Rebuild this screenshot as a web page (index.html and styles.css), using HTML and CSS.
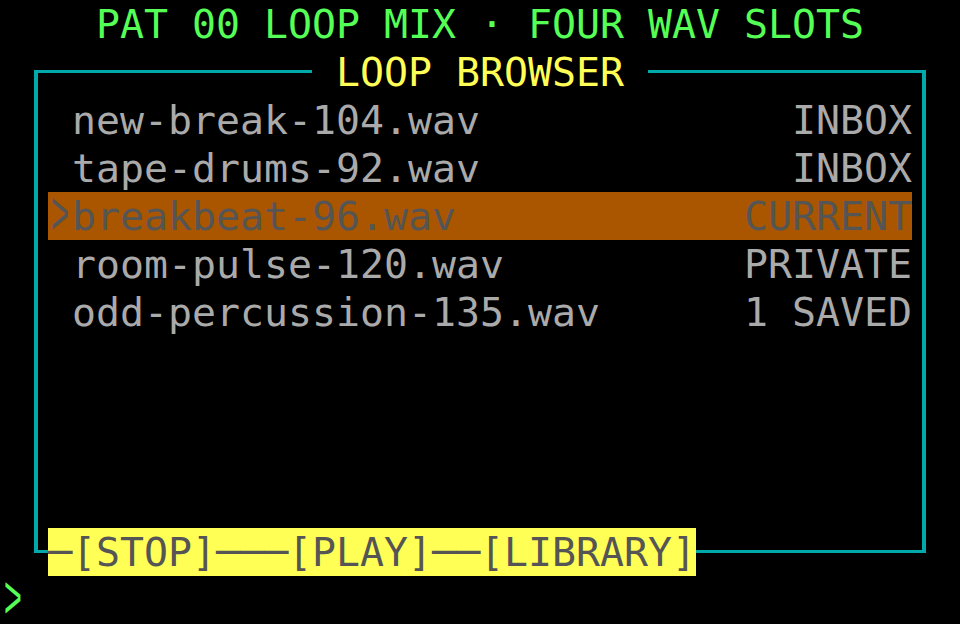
FILE: index.html
```html
<!DOCTYPE html>
<html>
<head>
<meta charset="utf-8">
<link rel="stylesheet" href="styles.css">
</head>
<body>
<div class="screen">
  <div class="title">PAT 00 LOOP MIX · FOUR WAV SLOTS</div>
  <div class="panel">
    <div class="legend"> LOOP BROWSER </div>
    <ul class="list">
      <li class="item"><span class="mark"></span><span class="name">new-break-104.wav</span><span class="status">INBOX</span></li>
      <li class="item"><span class="mark"></span><span class="name">tape-drums-92.wav</span><span class="status">INBOX</span></li>
      <li class="item selected"><span class="mark"><span class="chev">&gt;</span></span><span class="name">breakbeat-96.wav</span><span class="status">CURRENT</span></li>
      <li class="item"><span class="mark"></span><span class="name">room-pulse-120.wav</span><span class="status">PRIVATE</span></li>
      <li class="item"><span class="mark"></span><span class="name">odd-percussion-135.wav</span><span class="status">1 SAVED</span></li>
    </ul>
    <div class="controls">─[STOP]───[PLAY]──[LIBRARY]</div>
  </div>
  <div class="prompt"><span class="chev">&gt;</span></div>
</div>
</body>
</html>
```

FILE: styles.css
```css
html, body {
  margin: 0;
  padding: 0;
  background: #000;
}
.screen {
  width: 960px;
  height: 624px;
  overflow: hidden;
  background: #000;
  font-family: "DejaVu Sans Mono", "Liberation Mono", monospace;
  font-size: 39.86px;
  line-height: 48px;
  color: #aaaaaa;
}
.title {
  height: 48px;
  padding-left: 96px;
  color: #55ff55;
  white-space: pre;
}
.panel {
  position: relative;
  box-sizing: border-box;
  margin: 22px 0 0 34px;
  width: 892px;
  height: 483px;
  border: 3px solid #00aaaa;
  border-left-width: 4px;
  border-right-width: 4px;
}
.legend {
  position: absolute;
  left: 274px;
  top: -25px;
  height: 48px;
  background: #000;
  color: #ffff55;
  white-space: pre;
}
.list {
  list-style: none;
  margin: 0;
  padding: 23px 0 0 10px;
}
.item {
  display: flex;
  width: 864px;
  height: 48px;
  white-space: pre;
}
.item.selected {
  background: #aa5500;
  color: #555555;
}
.mark {
  width: 24px;
  flex: none;
}
.name {
  flex: 1;
}
.status {
  flex: none;
}
.chev {
  display: inline-block;
  width: 24px;
  font-family: "Liberation Mono", monospace;
  font-size: 36px;
  text-align: center;
  transform: scale(0.85, 1.7);
  transform-origin: 50% 58%;
}
.controls {
  position: absolute;
  left: 10px;
  top: 455px;
  width: 648px;
  height: 48px;
  background: #ffff55;
  color: #555555;
  white-space: pre;
}
.prompt {
  margin-top: 23px;
  height: 48px;
  padding-left: 1px;
  color: #55ff55;
}
```
